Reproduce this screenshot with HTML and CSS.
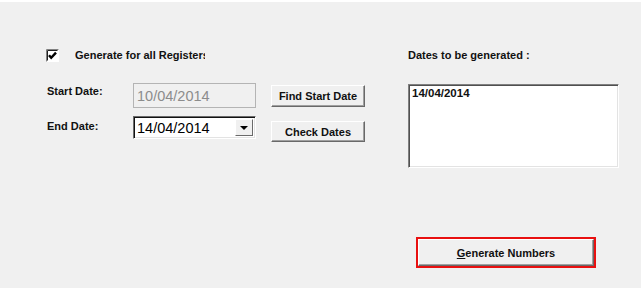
FILE: index.html
```html
<!DOCTYPE html>
<html lang="en">
<head>
  <meta charset="UTF-8" />
  <title>Generate Numbers</title>
  <link rel="stylesheet" href="styles.css">
</head>
<body>
  <div class="panel">
    <div class="top">
      <div class="left">
        <div class="check-row">
          <svg class="check-box" width="13" height="13" viewBox="0 0 13 13">
            <rect x="0" y="0" width="13" height="13" fill="#ffffff"/>
            <path d="M0.5 12.5V0.5H12.5" fill="none" stroke="#808080"/>
            <path d="M1.5 11.5V1.5H11.5" fill="none" stroke="#202020"/>
            <path d="M3 6.2L5.2 8.8L10 3.6" fill="none" stroke="#000" stroke-width="2.4"/>
          </svg>
          <span class="check-label">Generate for all Registers</span>
        </div>

        <div class="date-grid">
          <span class="lbl lbl-start">Start Date:</span>
          <div class="field disabled">10/04/2014</div>
          <button class="btn btn-find">Find Start Date</button>

          <span class="lbl lbl-end">End Date:</span>
          <div class="combo">
            <span class="combo-value">14/04/2014</span>
            <span class="combo-arrow"><span class="tri"></span></span>
          </div>
          <button class="btn btn-check">Check Dates</button>
        </div>
      </div>

      <div class="right">
        <div class="lbl list-title">Dates to be generated :</div>
        <div class="listbox">
          <div class="list-item">14/04/2014</div>
        </div>
      </div>
    </div>

    <div class="actions">
      <div class="focus-ring">
        <button class="btn btn-big"><u>G</u>enerate Numbers</button>
      </div>
    </div>
  </div>
</body>
</html>
```

FILE: styles.css
```css
body {
  margin: 0;
  height: 286px;
  border-top: 2px solid #ffffff;
  background: #f0f0f0;
  font-family: 'Liberation Sans', Arial, sans-serif;
  color: #111;
  overflow: hidden;
}

.panel {
  padding: 47px 0 0 46px;
}

.top {
  display: flex;
  gap: 43px;
}

.lbl {
  font-size: 11px;
  font-weight: bold;
  line-height: 13px;
  white-space: nowrap;
}

/* checkbox row */
.check-row {
  display: flex;
  align-items: center;
  gap: 16px;
  height: 13px;
}

.check-box {
  display: block;
  flex: none;
}

.check-label {
  font-size: 11px;
  font-weight: bold;
  line-height: 13px;
  width: 130px;
  overflow: hidden;
  white-space: nowrap;
}

/* start / end date */
.date-grid {
  display: grid;
  grid-template-columns: 87px 123px 109px;
  row-gap: 8px;
  margin-top: 21px;
  align-items: start;
}

.lbl-start {
  padding: 2px 0 0 1px;
}

.lbl-end {
  padding: 4px 0 0 1px;
}

.field {
  box-sizing: border-box;
  height: 25px;
  display: flex;
  align-items: center;
  padding-left: 3px;
  font-size: 14.5px;
}

.field.disabled {
  border: 1px solid #b4b4b4;
  background: #f0f0f0;
  color: #8c8c8c;
}

.combo {
  box-sizing: border-box;
  height: 23px;
  display: flex;
  align-items: stretch;
  background: #ffffff;
  border-top: 1px solid #6a6a6a;
  border-left: 1px solid #6a6a6a;
  border-right: 1px solid #ffffff;
  border-bottom: 1px solid #ffffff;
  box-shadow: inset 1px 1px 0 #111, inset -1px -1px 0 #e3e3e3;
  padding: 2px 2px 2px 3px;
}

.combo-value {
  flex: 1;
  display: flex;
  align-items: center;
  font-size: 14.5px;
  color: #000;
}

.combo-arrow {
  box-sizing: border-box;
  width: 18px;
  display: flex;
  align-items: center;
  justify-content: center;
  background: #f0f0f0;
  border-top: 1px solid #ffffff;
  border-left: 1px solid #ffffff;
  border-right: 1px solid #6a6a6a;
  border-bottom: 1px solid #6a6a6a;
}

.tri {
  width: 0;
  height: 0;
  border-left: 4px solid transparent;
  border-right: 4px solid transparent;
  border-top: 4px solid #000;
}

/* push buttons */
.btn {
  box-sizing: border-box;
  margin: 0;
  padding: 0;
  background: #f0f0f0;
  font-family: 'Liberation Sans', Arial, sans-serif;
  font-size: 11px;
  font-weight: bold;
  color: #111;
  border-top: 1px solid #ffffff;
  border-left: 1px solid #ffffff;
  border-right: 1px solid #696969;
  border-bottom: 1px solid #696969;
  box-shadow: inset -1px -1px 0 #a0a0a0;
  white-space: nowrap;
}

.btn-find,
.btn-check {
  width: 94px;
  margin-left: 15px;
}

.btn-find {
  height: 22px;
  margin-top: 2px;
}

.btn-check {
  height: 21px;
  margin-top: 5px;
}

/* dates list */
.listbox {
  box-sizing: border-box;
  width: 211px;
  height: 84px;
  margin-top: 22px;
  background: #ffffff;
  border-top: 1px solid #808080;
  border-left: 1px solid #808080;
  border-right: 1px solid #ffffff;
  border-bottom: 1px solid #ffffff;
  box-shadow: inset 1px 1px 0 #505050, inset -1px -1px 0 #e3e3e3;
  padding: 2px 3px;
}

.list-item {
  font-size: 11.5px;
  font-weight: bold;
  line-height: 13px;
  color: #111;
}

/* bottom action */
.actions {
  display: flex;
  margin-top: 69px;
  padding-left: 370px;
}

.focus-ring {
  box-sizing: border-box;
  width: 180px;
  height: 31px;
  border: 2px solid #e81010;
  display: flex;
}

.btn-big {
  flex: 1;
  height: 100%;
}
```
